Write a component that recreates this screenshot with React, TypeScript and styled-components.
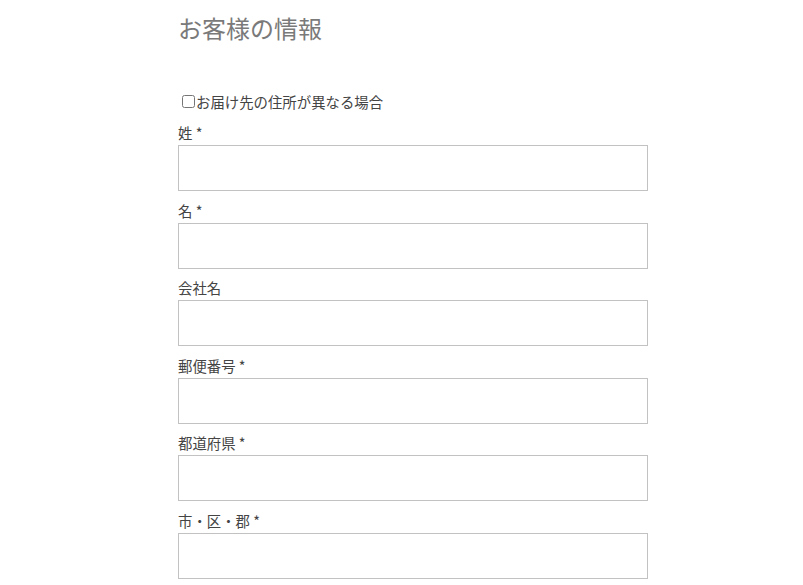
import React from "react";
import styled, { createGlobalStyle } from "styled-components";

const Global = createGlobalStyle`
  html, body { margin: 0; padding: 0; background: #fff; }
  body { font-family: "Noto Sans CJK JP", "Noto Sans", sans-serif; }
  * { box-sizing: border-box; }
`;

const Page = styled.div`
  padding: 0 0 0 178px;
`;

const Form = styled.form`
  width: 470px;
  display: flex;
  flex-direction: column;
`;

const Heading = styled.h3`
  margin: 0;
  padding-top: 11px;
  height: 89px;
  font-size: 24px;
  line-height: 34px;
  font-weight: 400;
  color: #7a7a7a;
`;

const CheckRow = styled.label`
  display: flex;
  align-items: center;
  height: 24px;
  font-size: 14.4px;
  color: #444;
  margin-bottom: 9px;
`;

const Check = styled.input`
  width: 13px;
  height: 13px;
  margin: 0 1px 0 4px;
`;

const Field = styled.div`
  display: flex;
  flex-direction: column;
  margin-bottom: 8.6px;
`;

const Label = styled.label`
  font-size: 14.4px;
  line-height: 21px;
  color: #444;
  margin-bottom: 2px;
`;

const Input = styled.input`
  height: 46px;
  width: 470px;
  border: 1px solid #c2c2c2;
  background: #fff;
  padding: 0 8px;
  font-size: 14px;
  outline: none;
`;

const fields: { label: string; required: boolean }[] = [
  { label: "姓", required: true },
  { label: "名", required: true },
  { label: "会社名", required: false },
  { label: "郵便番号", required: true },
  { label: "都道府県", required: true },
  { label: "市・区・郡", required: true },
];

export default function App() {
  return (
    <Page>
      <Global />
      <Form>
        <Heading>お客様の情報</Heading>
        <CheckRow>
          <Check type="checkbox" />
          お届け先の住所が異なる場合
        </CheckRow>
        {fields.map((f, i) => (
          <Field key={i}>
            <Label>
              {f.label}
              {f.required ? " *" : ""}
            </Label>
            <Input type="text" />
          </Field>
        ))}
      </Form>
    </Page>
  );
}
